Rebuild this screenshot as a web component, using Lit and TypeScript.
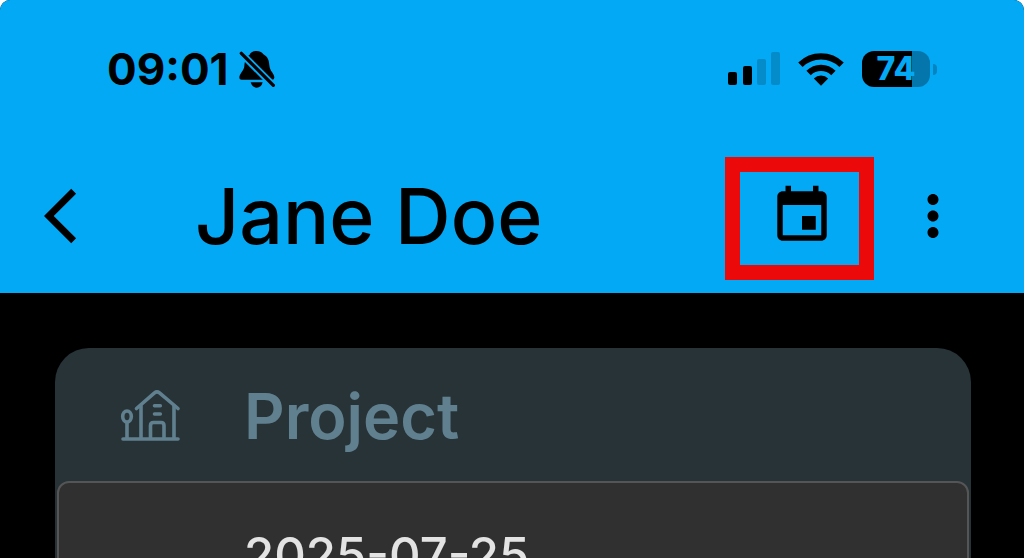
import { LitElement, html, css } from "lit";
import { customElement, property } from "lit/decorators.js";

@customElement("status-bar")
class StatusBar extends LitElement {
  @property() time = "";
  @property({ type: Number }) battery = 0;

  static styles = css`
    :host {
      display: flex;
      align-items: center;
      justify-content: space-between;
      height: 138px;
      padding: 0 87px 0 107px;
      box-sizing: border-box;
    }
    .group {
      display: flex;
      align-items: center;
    }
    .left { gap: 10px; }
    .right { gap: 18px; }
    .time {
      font-size: 44px;
      font-weight: 700;
      line-height: 52px;
    }
    .battery {
      display: flex;
      align-items: center;
      gap: 3px;
    }
    .cell {
      width: 68px;
      height: 36px;
      border-radius: 12px;
      text-align: center;
      font-size: 32px;
      font-weight: 800;
      line-height: 36px;
      color: #04a9f5;
    }
    .nub {
      width: 4px;
      height: 11px;
      border-radius: 0 5px 5px 0;
      background: #0485c1;
    }
    svg { display: block; }
  `;

  render() {
    const fill = `background: linear-gradient(to right, #000 ${this.battery}%, #0476ab ${this.battery}%)`;
    return html`
      <div class="group left">
        <span class="time">${this.time}</span>
        <svg width="36" height="38" viewBox="450 62 108 114" aria-label="Silent mode">
          <path d="M502 65C491 65 484 70 482 76C469 84 467 98 466 110C465 125 451 132 451 146Q451 151 458 151H549Q556 151 556 145C556 132 542 126 541 108C540 92 536 82 523 75C520 69 513 65 502 65Z" />
          <path d="M485 159H521Q517 175 503 175Q489 175 485 159Z" />
          <path d="M451 66L560 176" stroke="#04a9f5" stroke-width="21" />
          <path d="M457 72L553 168" stroke="#000" stroke-width="10" stroke-linecap="round" />
        </svg>
      </div>
      <div class="group right">
        <svg width="52" height="34" viewBox="0 0 52 34" aria-label="Signal">
          <rect x="0" y="20" width="9" height="13" rx="2" />
          <rect x="15" y="14" width="9" height="19" rx="2" />
          <rect x="29" y="7" width="9" height="26" rx="2" fill="#048bc9" />
          <rect x="43" y="0" width="9" height="33" rx="2" fill="#048bc9" />
        </svg>
        <svg width="46" height="34" viewBox="248 48 140 104" aria-label="Wi-Fi">
          <g fill="none" stroke="#000" stroke-width="19">
            <path d="M255 87A90 90 0 0 1 381 87" />
            <path d="M280 112A54 54 0 0 1 356 112" />
          </g>
          <path d="M318 151L296 129A31 31 0 0 1 340 129Z" />
        </svg>
        <div class="battery">
          <div class="cell" style=${fill}>${this.battery}</div>
          <div class="nub"></div>
        </div>
      </div>
    `;
  }
}

@customElement("app-bar")
class AppBar extends LitElement {
  @property() heading = "";

  static styles = css`
    :host {
      display: flex;
      align-items: center;
      height: 155px;
      padding: 0 58px 0 44px;
      box-sizing: border-box;
    }
    h1 {
      flex: 1;
      margin: 0 0 0 85px;
      font-size: 77px;
      font-weight: 500;
      line-height: 90px;
      white-space: nowrap;
    }
    button {
      position: relative;
      width: 66px;
      height: 66px;
      padding: 0;
      border: 0;
      background: none;
      color: #000;
    }
    .more { margin-left: 65px; }
    .highlight::after {
      content: "";
      position: absolute;
      inset: -26px -39px -31px -44px;
      border: 15px solid #eb0909;
    }
    svg {
      display: block;
      width: 66px;
      height: 66px;
    }
  `;

  render() {
    return html`
      <button aria-label="Back">
        <svg viewBox="0 0 24 24"><path d="M11.670 3.870L9.900 2.100 0 12l9.900 9.900 1.770-1.770L3.540 12z" /></svg>
      </button>
      <h1>${this.heading}</h1>
      <button class="highlight" aria-label="Calendar">
        <svg viewBox="0 0 24 24">
          <path d="M17 12h-5v5h5v-5zM16 1v2H8V1H6v2H5c-1.110 0-1.990.9-1.990 2L3 19c0 1.100.89 2 2 2h14c1.100 0 2-.9 2-2V5c0-1.100-.9-2-2-2h-1V1h-2zm3 18H5V8h14v11z" />
        </svg>
      </button>
      <button class="more" aria-label="More options">
        <svg viewBox="0 0 24 24">
          <path d="M12 8c1.100 0 2-.9 2-2s-.9-2-2-2-2 .9-2 2 .9 2 2 2zm0 2c-1.100 0-2 .9-2 2s.9 2 2 2 2-.9 2-2-.9-2-2-2zm0 6c-1.100 0-2 .9-2 2s.9 2 2 2 2-.9 2-2-.9-2-2-2z" />
        </svg>
      </button>
    `;
  }
}

@customElement("project-card")
class ProjectCard extends LitElement {
  @property() heading = "";
  @property() date = "";

  static styles = css`
    :host {
      display: block;
      padding: 0 2px 2px;
      border-radius: 34px;
      background: #283338;
    }
    .head {
      display: flex;
      align-items: center;
      gap: 61px;
      height: 133px;
      padding: 3px 62px 0;
      box-sizing: border-box;
      color: #60808f;
    }
    h2 {
      margin: 0;
      font-size: 63px;
      font-weight: 600;
      line-height: 76px;
    }
    .entry {
      padding: 42px 185px;
      border: 2px solid #555;
      border-radius: 12px;
      background: #303030;
      color: #e3e3e3;
      font-size: 49px;
      font-weight: 500;
      line-height: 62px;
    }
    svg { display: block; }
  `;

  render() {
    return html`
      <div class="head">
        <svg width="64" height="58" viewBox="119 386 64 58" fill="none" stroke="currentColor"
          stroke-width="3.600" stroke-linecap="round" stroke-linejoin="round" aria-hidden="true">
          <path d="M123 438H178M127 422V437M141 405V437M174 405V437" />
          <ellipse cx="127" cy="415.500" rx="4.300" ry="5.500" />
          <path d="M136.500 407.500L154.500 391.800Q157 389.800 159.500 391.800L178 407.500" />
          <path d="M150.500 437V424.500Q150.500 421.500 153.500 421.500H161Q164 421.500 164 424.500V437" />
          <path d="M154.500 404.700H160.300M154.500 413H160.300" />
        </svg>
        <h2>${this.heading}</h2>
      </div>
      <div class="entry"><time datetime=${this.date}>${this.date}</time></div>
    `;
  }
}

@customElement("app-root")
class AppRoot extends LitElement {
  static styles = css`
    :host {
      display: block;
      height: 100vh;
      overflow: hidden;
      border-radius: 10px 10px 0 0;
      background: #000;
      color: #000;
      font-family: Inter, "Open Sans", sans-serif;
    }
    header { background: #04a9f5; }
    main { padding: 55px 53px 55px 55px; }
  `;

  render() {
    return html`
      <header>
        <status-bar time="09:01" battery="74"></status-bar>
        <app-bar heading="Jane Doe"></app-bar>
      </header>
      <main>
        <project-card heading="Project" date="2025-07-25"></project-card>
      </main>
    `;
  }
}
